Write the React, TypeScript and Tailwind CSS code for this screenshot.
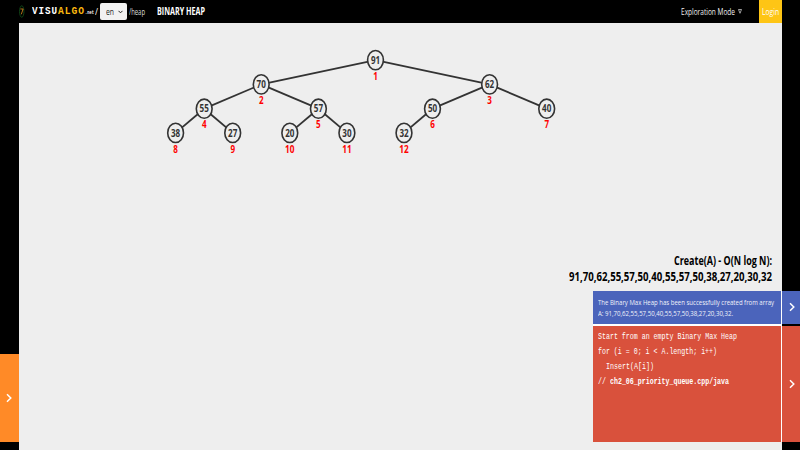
import { useLayoutEffect, useRef, useState } from "react";

const SANS = "font-['Open_Sans','Noto_Sans',sans-serif]";
const MONO = "font-['Liberation_Mono',monospace]";

// Condenses a single line of text horizontally so that it fills its box.
function Fit({ text, className }: { text: string; className: string }) {
  const box = useRef<HTMLSpanElement>(null);
  const inner = useRef<HTMLSpanElement>(null);
  const [scale, setScale] = useState(1);
  useLayoutEffect(() => {
    if (box.current && inner.current) {
      setScale(box.current.offsetWidth / inner.current.getBoundingClientRect().width);
    }
  }, []);
  return (
    <span ref={box} className={`block shrink-0 whitespace-pre ${className}`}>
      <span ref={inner} className="inline-block origin-left" style={{ transform: `scaleX(${scale})` }}>
        {text}
      </span>
    </span>
  );
}

function Chevron({ className }: { className: string }) {
  return (
    <svg viewBox="0 0 6 10" className={className} fill="none" stroke="currentColor" strokeWidth="1.5">
      <path d="M1 1.2 4.8 5 1 8.8" />
    </svg>
  );
}

const nodes = [
  { v: 91, x: 375.5, y: 60.1 },
  { v: 70, x: 261.2, y: 84.4 },
  { v: 62, x: 489.6, y: 84.4 },
  { v: 55, x: 204.2, y: 108.7 },
  { v: 57, x: 318.4, y: 108.7 },
  { v: 50, x: 432.5, y: 108.7 },
  { v: 40, x: 546.7, y: 108.7 },
  { v: 38, x: 175.6, y: 132.9 },
  { v: 27, x: 232.7, y: 132.9 },
  { v: 20, x: 289.8, y: 132.9 },
  { v: 30, x: 346.9, y: 132.9 },
  { v: 32, x: 404, y: 132.9 },
];

function HeapTree() {
  return (
    <svg viewBox="19 23 763 227" className={`block h-[227px] w-[763px] ${SANS}`}>
      {nodes.slice(1).map((n, i) => {
        const p = nodes[Math.floor(i / 2)];
        return <line key={n.v} x1={p.x} y1={p.y} x2={n.x} y2={n.y} stroke="#333" strokeWidth="1.8" />;
      })}
      {nodes.map((n, i) => (
        <g key={n.v} textAnchor="middle" fontWeight="700">
          <ellipse cx={n.x} cy={n.y} rx="7.9" ry="9.6" fill="#eee" stroke="#333" strokeWidth="1.6" />
          <text x={n.x} y={n.y + 3.6} fontSize="10" fill="#333" textLength="9.2" lengthAdjust="spacingAndGlyphs">
            {n.v}
          </text>
          <text
            x={n.x}
            y={n.y + 19.6}
            fontSize="10"
            fill="#ff0000"
            textLength={i < 9 ? 4.6 : 9.4}
            lengthAdjust="spacingAndGlyphs"
          >
            {i + 1}
          </text>
        </g>
      ))}
    </svg>
  );
}

function Header() {
  return (
    <header className="flex h-[23px] shrink-0 items-center bg-black text-white">
      <svg viewBox="0 0 6 14" className="h-[13px] w-[5.5px] shrink-0" preserveAspectRatio="none">
        <ellipse cx="3" cy="7" rx="2.4" ry="6.2" fill="none" stroke="#165a20" strokeWidth="0.8" />
        <path d="M1.5 4.3h3L2.5 10" fill="none" stroke="#d88a20" strokeWidth="0.9" />
      </svg>
      <Fit text="VISU" className={`ml-[7px] w-[26px] text-[10px] leading-[23px] tracking-[1px] ${MONO} font-bold`} />
      <Fit text="ALGO" className={`w-[27px] text-[10px] leading-[23px] tracking-[1px] text-[#fcb80f] ${MONO} font-bold`} />
      <Fit text=".net" className={`mt-[3px] w-[9px] text-[5px] leading-[20px] ${MONO} font-bold`} />
      <Fit text="/" className={`ml-[1.5px] w-[3px] text-[9px] leading-[23px] ${SANS}`} />
      <button className="ml-[1.5px] flex h-[17px] w-[27px] shrink-0 items-center rounded-[2px] bg-[#f2f2f2] text-[#222]">
        <Fit text="en" className={`ml-[6px] w-[8px] text-[9px] leading-[17px] ${SANS}`} />
        <svg viewBox="0 0 6 4" className="ml-[4px] h-[4px] w-[5px]" fill="none" stroke="currentColor" strokeWidth="1.2">
          <path d="M.6.6 3 3 5.4.6" />
        </svg>
      </button>
      <Fit text="/heap" className={`ml-[2px] w-[16px] text-[8.6px] leading-[24px] text-[#ddd] ${SANS}`} />
      <Fit text="BINARY HEAP" className={`ml-[12px] w-[48px] text-[9.8px] leading-[23px] font-bold ${SANS}`} />
      <Fit text="Exploration Mode" className={`ml-auto w-[54px] text-[9px] leading-[23px] text-[#eee] ${SANS}`} />
      <svg viewBox="0 0 4 5" className="mr-[16.5px] ml-[3px] h-[5px] w-[4px]" fill="none" stroke="#ddd" strokeWidth="0.7">
        <path d="M.5.5h3L2 4.3z" />
      </svg>
      <div className="flex h-[23px] w-[23.5px] justify-center bg-[#fec515]">
        <Fit text="Login" className={`w-[17px] text-[9px] leading-[24px] ${SANS}`} />
      </div>
    </header>
  );
}

export default function App() {
  return (
    <div className="flex h-[450px] w-[800px] overflow-hidden bg-black">
      <aside className="flex w-[19px] shrink-0 flex-col pt-[354px]">
        <div className="flex h-[88px] items-center bg-[#ff8a27] pl-[6px] text-white">
          <Chevron className="h-[10px] w-[6px]" />
        </div>
      </aside>
      <main className="flex w-[763px] shrink-0 flex-col bg-[#eee]">
        <Header />
        <HeapTree />
        <div className={`flex h-[41px] flex-col items-end pt-[2px] pr-[10px] font-bold text-black ${SANS}`}>
          <Fit text="Create(A) - O(N log N):" className="w-[98px] text-[11.5px] leading-[17px]" />
          <Fit text="91,70,62,55,57,50,40,55,57,50,38,27,20,30,32" className="w-[203px] text-[11.5px] leading-[16px]" />
        </div>
        <div className="ml-[574px] flex w-[189px] flex-col gap-[2px] bg-white pr-[1.5px] text-white">
          <section className={`flex h-[32.5px] flex-col bg-[#4b64bb] pt-[6px] pl-[5px] text-[8px] text-[#f0f2fa] ${SANS}`}>
            <Fit text="The Binary Max Heap has been successfully created from array" className="w-[176px] leading-[10.5px]" />
            <Fit text="A: 91,70,62,55,57,50,40,55,57,50,38,27,20,30,32." className="w-[135px] leading-[10.5px]" />
          </section>
          <section className={`flex h-[116.5px] flex-col bg-[#d9513c] pt-[4px] pl-[5px] text-[8.7px] leading-[15.2px] ${MONO}`}>
            <Fit text="Start from an empty Binary Max Heap" className="w-[139px]" />
            <Fit text="for (i = 0; i < A.length; i++)" className="w-[119px]" />
            <Fit text="  Insert(A[i])" className="w-[55.5px]" />
            <div className="flex">
              <Fit text="// " className="w-[12px]" />
              <Fit text="ch2_06_priority_queue.cpp/java" className="w-[119px] font-bold" />
            </div>
          </section>
        </div>
      </main>
      <aside className="flex w-[18px] shrink-0 flex-col gap-[2px] pt-[291px] text-white">
        <div className="flex h-[32.5px] shrink-0 items-center bg-[#4b64bb] pl-[7px]">
          <Chevron className="h-[10px] w-[6px]" />
        </div>
        <div className="flex h-[116.5px] shrink-0 items-center bg-[#d9513c] pl-[7px]">
          <Chevron className="h-[10px] w-[6px]" />
        </div>
      </aside>
    </div>
  );
}
